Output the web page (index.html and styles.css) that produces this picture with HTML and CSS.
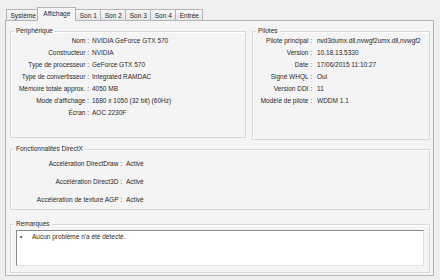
FILE: index.html
```html
<!DOCTYPE html>
<html lang="fr">
<head>
  <meta charset="UTF-8">
  <title>Outil de diagnostic DirectX</title>
  <link rel="stylesheet" href="styles.css">
</head>
<body>
  <div class="dialog">
    <div class="tabs">
      <div class="tab">Système</div>
      <div class="tab active">Affichage</div>
      <div class="tab">Son 1</div>
      <div class="tab">Son 2</div>
      <div class="tab">Son 3</div>
      <div class="tab">Son 4</div>
      <div class="tab">Entrée</div>
    </div>
    <div class="panel">
      <div class="top">
        <fieldset class="group device">
          <legend>Périphérique</legend>
          <div class="props">
            <span class="key">Nom :</span><span class="val">NVIDIA GeForce GTX 570</span>
            <span class="key">Constructeur :</span><span class="val">NVIDIA</span>
            <span class="key">Type de processeur :</span><span class="val">GeForce GTX 570</span>
            <span class="key">Type de convertisseur :</span><span class="val">Integrated RAMDAC</span>
            <span class="key">Mémoire totale approx. :</span><span class="val">4050 MB</span>
            <span class="key">Mode d'affichage :</span><span class="val">1680 x 1050 (32 bit) (60Hz)</span>
            <span class="key">Écran :</span><span class="val">AOC 2230F</span>
          </div>
        </fieldset>
        <fieldset class="group drivers">
          <legend>Pilotes</legend>
          <div class="props">
            <span class="key">Pilote principal :</span><span class="val">nvd3dumx.dll,nvwgf2umx.dll,nvwgf2</span>
            <span class="key">Version :</span><span class="val">10.18.13.5330</span>
            <span class="key">Date :</span><span class="val">17/06/2015 11:10:27</span>
            <span class="key">Signé WHQL :</span><span class="val">Oui</span>
            <span class="key">Version DDI :</span><span class="val">11</span>
            <span class="key">Modèle de pilote :</span><span class="val">WDDM 1.1</span>
          </div>
        </fieldset>
      </div>
      <fieldset class="group directx">
        <legend>Fonctionnalités DirectX</legend>
        <div class="props">
          <span class="key">Accélération DirectDraw :</span><span class="val">Activé</span>
          <span class="key">Accélération Direct3D :</span><span class="val">Activé</span>
          <span class="key">Accélération de texture AGP :</span><span class="val">Activé</span>
        </div>
      </fieldset>
      <fieldset class="group notes">
        <legend>Remarques</legend>
        <div class="notebox">
          <div class="note"><span class="bullet">•</span>Aucun problème n'a été détecté.</div>
        </div>
      </fieldset>
    </div>
  </div>
</body>
</html>
```

FILE: styles.css
```css
body {
  margin: 0;
  background-color: #efefef;
  font-family: "Liberation Sans", Arial, sans-serif;
  font-size: 6.5px;
  color: #2a2a2a;
}
.dialog {
  width: 440px;
  height: 280px;
  box-sizing: border-box;
  padding: 7px 6px 0 5px;
}
.tabs {
  display: flex;
  align-items: flex-end;
  height: 13px;
  padding-left: 1px;
}
.tab {
  height: 11px;
  line-height: 11px;
  padding: 0 3.5px;
  box-sizing: border-box;
  border: 1px solid #b4b4b4;
  border-bottom: none;
  margin-right: -1px;
  background: linear-gradient(#f6f6f6, #e6e6e6);
}
.tab.active {
  height: 14px;
  line-height: 12px;
  margin: 0 -1px -1px -2px;
  padding: 0 5px;
  background: #f4f4f4;
  position: relative;
  z-index: 1;
}
.panel {
  height: 256px;
  box-sizing: border-box;
  border: 1px solid #b4b4b4;
  background: #f4f4f4;
  padding: 6px 3px 0 4px;
}
.top {
  display: flex;
  gap: 6px;
}
.group {
  margin: 0;
  padding: 0;
  border: 1px solid #d8d8d8;
  box-shadow: inset 1px 1px 0 #fff;
  min-width: 0;
}
.group legend {
  margin-left: 3px;
  padding: 0 2px;
  line-height: 8px;
}
.device {
  flex: 0 0 236px;
  box-sizing: border-box;
  height: 111px;
}
.drivers {
  flex: 1;
  height: 111px;
}
.props {
  display: grid;
  grid-template-columns: 78px 1fr;
  column-gap: 3px;
  grid-auto-rows: 12px;
  line-height: 12px;
}
.key {
  text-align: right;
  white-space: nowrap;
}
.val {
  white-space: nowrap;
  overflow: hidden;
}
.drivers .props {
  grid-template-columns: 59px 1fr;
  column-gap: 5px;
  padding-right: 2px;
}
.directx {
  margin-top: 5px;
}
.directx .props {
  grid-template-columns: 111px 1fr;
  column-gap: 4px;
  grid-auto-rows: 18px;
  line-height: 18px;
  padding-top: 2px;
}
.notes {
  margin-top: 10px;
  padding-bottom: 6px;
}
.notebox {
  margin: 2px 5px 0;
  height: 36px;
  box-sizing: border-box;
  background: #fff;
  border: 1px solid #e2e2e2;
  border-top-color: #8a8a8a;
  border-left-color: #8a8a8a;
  padding: 1px 3px;
}
.note {
  line-height: 10px;
}
.bullet {
  display: inline-block;
  width: 12px;
}
```
